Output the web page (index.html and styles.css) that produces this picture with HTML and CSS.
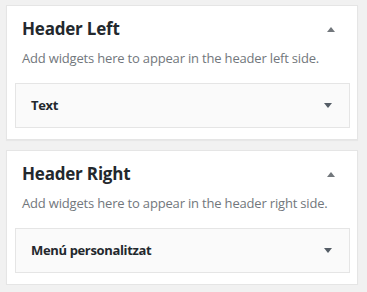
FILE: index.html
```html
<!DOCTYPE html>
<html>
<head>
<meta charset="utf-8">
<link rel="stylesheet" href="styles.css">
</head>
<body>
<div class="sidebars">
  <div class="panel">
    <div class="panel-head">
      <h2 class="panel-title">Header Left</h2>
      <span class="arrow arrow-up"></span>
    </div>
    <p class="desc">Add widgets here to appear in the header left side.</p>
    <div class="widget">
      <h3 class="widget-title">Text</h3>
      <span class="arrow arrow-down"></span>
    </div>
  </div>
  <div class="panel">
    <div class="panel-head">
      <h2 class="panel-title">Header Right</h2>
      <span class="arrow arrow-up"></span>
    </div>
    <p class="desc">Add widgets here to appear in the header right side.</p>
    <div class="widget">
      <h3 class="widget-title">Menú personalitzat</h3>
      <span class="arrow arrow-down"></span>
    </div>
  </div>
</div>
</body>
</html>
```
FILE: styles.css
```css
html, body {
  margin: 0;
  background: #f1f1f1;
}
body {
  font-family: "Open Sans", "Noto Sans", sans-serif;
  color: #23282d;
}
.sidebars {
  padding: 5px 9px 0 6px;
  display: flex;
  flex-direction: column;
  gap: 10px;
}
.panel {
  background: #fff;
  border: 1px solid #e5e5e5;
  box-shadow: 0 1px 1px rgba(0,0,0,.04);
  padding: 11px 0 11px 0;
}
.panel-head {
  display: flex;
  align-items: center;
  justify-content: space-between;
  padding: 0 22px 0 15px;
}
.panel-title {
  margin: 0;
  font-size: 17px;
  line-height: 24px;
  font-weight: 700;
  letter-spacing: -0.2px;
  color: #23282d;
}
.desc {
  margin: 8px 0 16px;
  padding: 0 15px;
  font-size: 13px;
  line-height: 18px;
  letter-spacing: -0.18px;
  color: #72777c;
}
.widget {
  margin: 0 7px 0 8px;
  background: #fafafa;
  border: 1px solid #e5e5e5;
  padding: 12px 17px 13px 15px;
  display: flex;
  align-items: center;
  justify-content: space-between;
}
.widget-title {
  margin: 0;
  font-size: 13px;
  line-height: 18px;
  font-weight: 700;
  letter-spacing: -0.35px;
  color: #23282d;
}
.arrow {
  width: 0;
  height: 0;
  border-left: 4px solid transparent;
  border-right: 4px solid transparent;
}
.arrow-up {
  border-bottom: 5px solid #72777c;
}
.arrow-down {
  border-top: 5px solid #555d66;
}
```
